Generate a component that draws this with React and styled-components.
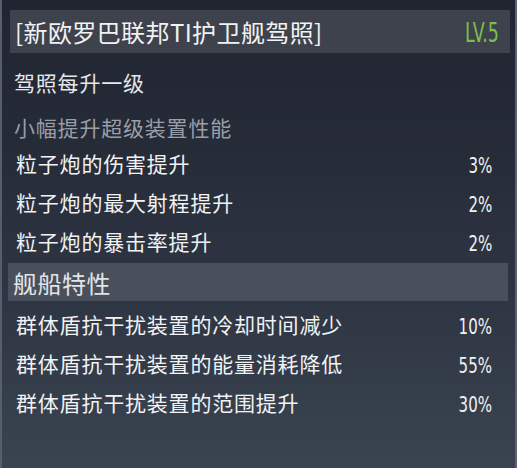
import React from 'react'
import styled, { createGlobalStyle } from 'styled-components'

const GlobalStyle = createGlobalStyle`
  html, body {
    margin: 0;
    padding: 0;
    background: #222633;
  }
  * {
    box-sizing: border-box;
  }
`

const bonuses = [
  { name: '粒子炮的伤害提升', value: '3%' },
  { name: '粒子炮的最大射程提升', value: '2%' },
  { name: '粒子炮的暴击率提升', value: '2%' },
]

const traits = [
  { name: '群体盾抗干扰装置的冷却时间减少', value: '10%' },
  { name: '群体盾抗干扰装置的能量消耗降低', value: '55%' },
  { name: '群体盾抗干扰装置的范围提升', value: '30%' },
]

function App() {
  return (
    <>
      <GlobalStyle />
      <Panel>
        <TitleBar>
          <Title>[新欧罗巴联邦TI护卫舰驾照]</Title>
          <Level>LV.5</Level>
        </TitleBar>
        <Intro>驾照每升一级</Intro>
        <Hint>小幅提升超级装置性能</Hint>
        <List>
          {bonuses.map((b) => (
            <Row key={b.name}>
              <Name>{b.name}</Name>
              <Value>{b.value}</Value>
            </Row>
          ))}
        </List>
        <SectionBar>舰船特性</SectionBar>
        <List $top={3}>
          {traits.map((t) => (
            <Row key={t.name}>
              <Name>{t.name}</Name>
              <Value>{t.value}</Value>
            </Row>
          ))}
        </List>
      </Panel>
    </>
  )
}

export default App


const Panel = styled.div`
    width: 517px;
    height: 468px;
    display: flex;
    flex-direction: column;
    background: linear-gradient(180deg, #212532 0%, #272c39 35%, #323a47 75%, #3a4450 100%);
    border-left: 2px solid #565d6b;
    border-right: 2px solid #5a6270;
    font-family: "Noto Sans CJK SC", "Noto Sans", sans-serif;
    color: #eeeff1;
    overflow: hidden;
`

const TitleBar = styled.div`
    height: 43px;
    margin: 10px 5px 0 8px;
    padding: 0 11px 0 5px;
    display: flex;
    align-items: center;
    justify-content: space-between;
    background: #3e424d;
`

const Title = styled.div`
    font-size: 24px;
    line-height: 1;
    letter-spacing: 0.4px;
    color: #f2f2f2;
`

const Level = styled.div`
    font-family: "DejaVu Sans Condensed", "DejaVu Sans", sans-serif;
    font-size: 27px;
    line-height: 1;
    margin-top: 2px;
    color: #7fbd4b;
    transform: scaleX(0.72);
    transform-origin: right center;
`

const Intro = styled.div`
    height: 58px;
    padding-left: 12px;
    display: flex;
    align-items: center;
    font-size: 21px;
    letter-spacing: 0.8px;
    color: #e6e7ea;
`

const Hint = styled.div`
    height: 32px;
    padding-left: 12px;
    display: flex;
    align-items: center;
    font-size: 21px;
    letter-spacing: 0.8px;
    color: #9a9ea7;
`

const List = styled.div`
    display: flex;
    flex-direction: column;
    padding-top: ${(p) => p.$top || 0}px;
`

const Row = styled.div`
    height: 39px;
    padding: 0 23px 0 14px;
    display: flex;
    align-items: center;
    justify-content: space-between;
`

const Name = styled.span`
    font-size: 21px;
    letter-spacing: 0.8px;
    color: #f1f2f4;
`

const Value = styled.span`
    font-family: "DejaVu Sans Condensed", "DejaVu Sans", sans-serif;
    font-size: 22px;
    margin-top: 6px;
    color: #f1f2f4;
    transform: scaleX(0.76);
    transform-origin: right center;
`

const SectionBar = styled.div`
    height: 38px;
    margin: 3px 7px 0 6px;
    padding-left: 5px;
    display: flex;
    align-items: center;
    background: #4a505b;
    font-size: 24px;
    letter-spacing: 0.5px;
    color: #e2e4e8;
`
